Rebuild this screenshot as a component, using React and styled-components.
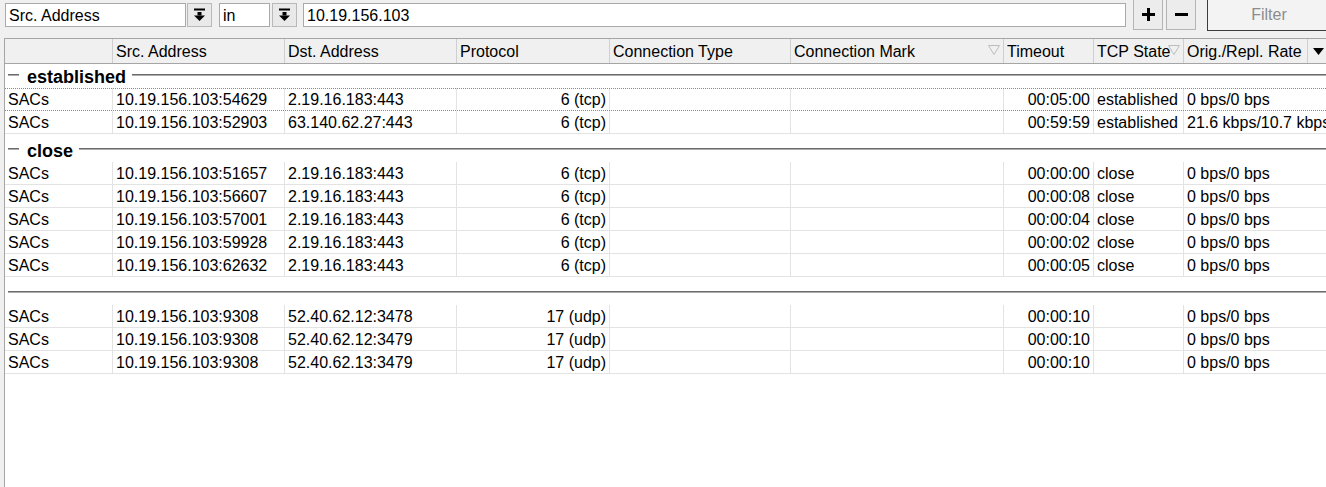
import React from 'react';
import styled, { createGlobalStyle } from 'styled-components';

const GlobalStyle = createGlobalStyle`
    html, body {
        margin: 0;
        padding: 0;
        overflow: hidden;
        background: #f0f0f0;
        font-family: "Liberation Sans", Arial, sans-serif;
        font-size: 16px;
        color: #000;
    }
`

const columns = [
    { key: 'comment', title: '', width: 108 },
    { key: 'src', title: 'Src. Address', width: 172 },
    { key: 'dst', title: 'Dst. Address', width: 172 },
    { key: 'proto', title: 'Protocol', width: 153, right: true },
    { key: 'type', title: 'Connection Type', width: 181 },
    { key: 'mark', title: 'Connection Mark', width: 213, sort: true },
    { key: 'timeout', title: 'Timeout', width: 90, right: true },
    { key: 'tcp', title: 'TCP State', width: 90, sort: true },
    { key: 'rate', title: 'Orig./Repl. Rate', width: 124 },
]

const headTemplate = columns.map(c => c.width + 'px').join(' ') + ' 1fr';
const rowTemplate = columns.slice(0, -1).map(c => c.width + 'px').join(' ') + ' 1fr';

const conn = (src, dst, proto, timeout, tcp, rate = '0 bps/0 bps') => ({
    comment: 'SACs', src, dst, proto, type: '', mark: '', timeout, tcp, rate,
})

const groups = [
    {
        name: 'established',
        rows: [
            conn('10.19.156.103:54629', '2.19.16.183:443', '6 (tcp)', '00:05:00', 'established'),
            conn('10.19.156.103:52903', '63.140.62.27:443', '6 (tcp)', '00:59:59', 'established', '21.6 kbps/10.7 kbps'),
        ],
    },
    {
        name: 'close',
        rows: [
            conn('10.19.156.103:51657', '2.19.16.183:443', '6 (tcp)', '00:00:00', 'close'),
            conn('10.19.156.103:56607', '2.19.16.183:443', '6 (tcp)', '00:00:08', 'close'),
            conn('10.19.156.103:57001', '2.19.16.183:443', '6 (tcp)', '00:00:04', 'close'),
            conn('10.19.156.103:59928', '2.19.16.183:443', '6 (tcp)', '00:00:02', 'close'),
            conn('10.19.156.103:62632', '2.19.16.183:443', '6 (tcp)', '00:00:05', 'close'),
        ],
    },
    {
        name: '',
        rows: [
            conn('10.19.156.103:9308', '52.40.62.12:3478', '17 (udp)', '00:00:10', ''),
            conn('10.19.156.103:9308', '52.40.62.12:3479', '17 (udp)', '00:00:10', ''),
            conn('10.19.156.103:9308', '52.40.62.13:3479', '17 (udp)', '00:00:10', ''),
        ],
    },
]

// bar over a down arrow, used on the combo drop buttons
const DropIcon = () => (
    <svg width="13" height="14" viewBox="0 0 13 14">
        <rect x="1" y="0.5" width="11" height="2" fill="#000" />
        <rect x="4.5" y="4" width="4" height="3.5" fill="#000" />
        <path d="M1 7.5h11L6.5 13z" fill="#000" />
    </svg>
)

const PlusIcon = () => (
    <svg width="13" height="13" viewBox="0 0 13 13">
        <rect x="5" y="0" width="3" height="13" fill="#000" />
        <rect x="0" y="5" width="13" height="3" fill="#000" />
    </svg>
)

const MinusIcon = () => (
    <svg width="13" height="13" viewBox="0 0 13 13">
        <rect x="0" y="5" width="13" height="3" fill="#000" />
    </svg>
)

const SortMark = () => (
    <svg width="12" height="10" viewBox="0 0 12 10">
        <path d="M0.5 0.5h11L6 9.5z" fill="none" stroke="#bdbdbd" />
    </svg>
)

const MenuArrow = () => (
    <svg width="11" height="7" viewBox="0 0 11 7">
        <path d="M0 0h11L5.5 7z" fill="#000" />
    </svg>
)

const App = () => {
    return (
        <Page>
            <GlobalStyle />
            <Toolbar>
                <Field $width={181}>Src. Address</Field>
                <DropButton $gap={1}><DropIcon /></DropButton>
                <Field $width={51} $gap={7}>in</Field>
                <DropButton $gap={2}><DropIcon /></DropButton>
                <Field $width={823} $gap={6}>10.19.156.103</Field>
                <SquareButton $gap={7}><PlusIcon /></SquareButton>
                <SquareButton $gap={3}><MinusIcon /></SquareButton>
                <FilterButton>Filter</FilterButton>
            </Toolbar>

            <Table>
                <HeadRow>
                    {columns.map(c => (
                        <HeadCell key={c.key}>
                            {c.title}
                            {c.sort && <SortSlot><SortMark /></SortSlot>}
                        </HeadCell>
                    ))}
                    <MenuCell><MenuArrow /></MenuCell>
                </HeadRow>

                {groups.map((g, gi) => (
                    <React.Fragment key={gi}>
                        <GroupRow $first={gi === 0}>
                            <GroupLine $short />
                            {g.name && <GroupName>{g.name}</GroupName>}
                            <GroupLine />
                        </GroupRow>
                        {g.rows.map((r, ri) => (
                            <Row key={ri} $focused={gi === 0 && ri === 0}>
                                {columns.map(c => (
                                    <Cell key={c.key} $right={c.right}>{r[c.key]}</Cell>
                                ))}
                            </Row>
                        ))}
                    </React.Fragment>
                ))}
            </Table>
        </Page>
    )
}

const Page = styled.div`
    display: flex;
    flex-direction: column;
    height: 100vh;
`

const Toolbar = styled.div`
    display: flex;
    align-items: flex-start;
    height: 31px;
    padding-left: 5px;
    margin-bottom: 7px;
    white-space: nowrap;
`

const Field = styled.div`
    box-sizing: border-box;
    width: ${p => p.$width}px;
    height: 24px;
    margin-top: 3px;
    margin-left: ${p => p.$gap || 0}px;
    padding: 1px 3px 0;
    line-height: 22px;
    background: #fff;
    border: 1px solid #a9a9a9;
    flex-shrink: 0;
`

const DropButton = styled.div`
    box-sizing: border-box;
    width: 25px;
    height: 24px;
    margin-top: 3px;
    margin-left: ${p => p.$gap}px;
    display: flex;
    align-items: center;
    justify-content: center;
    background: #e9e9e9;
    border: 1px solid #b9b9b9;
    flex-shrink: 0;
`

const SquareButton = styled.div`
    box-sizing: border-box;
    width: 30px;
    height: 31px;
    margin-top: -1px;
    margin-left: ${p => p.$gap}px;
    display: flex;
    align-items: center;
    justify-content: center;
    background: #ececec;
    border: 1px solid #b4b4b4;
    flex-shrink: 0;
`

const FilterButton = styled.div`
    box-sizing: border-box;
    width: 124px;
    height: 32px;
    margin-top: -1px;
    margin-left: 11px;
    display: flex;
    align-items: center;
    justify-content: center;
    background: #f3f3f3;
    border: 1px solid #3c3c3c;
    color: #8c8c8c;
    flex-shrink: 0;
`

const Table = styled.div`
    flex: 1;
    margin-left: 4px;
    background: #fff;
    border-top: 1px solid #a5a5a5;
    border-left: 1px solid #a5a5a5;
    white-space: nowrap;
`

const HeadRow = styled.div`
    display: grid;
    grid-template-columns: ${headTemplate};
    height: 25px;
    box-sizing: border-box;
    border-bottom: 1px solid #a5a5a5;
    background: #f0f0f0;
`

const HeadCell = styled.div`
    position: relative;
    box-sizing: border-box;
    padding: 1px 3px 0;
    line-height: 23px;
    border-right: 1px solid #cfcfcf;
    overflow: hidden;
`

const SortSlot = styled.span`
    position: absolute;
    right: 3px;
    top: 6px;
    line-height: 0;
`

const MenuCell = styled.div`
    display: flex;
    align-items: center;
    padding-left: 5px;
`

const GroupRow = styled.div`
    display: flex;
    align-items: center;
    height: 24px;
    padding-top: ${p => (p.$first ? 0 : 4)}px;
`

const GroupLine = styled.div`
    flex: ${p => (p.$short ? '0 0 11px' : '1')};
    margin-left: ${p => (p.$short ? 3 : 0)}px;
    margin-bottom: 3px;
    border-top: 1px solid #6c6c6c;
    border-bottom: 1px solid #ababab;
`

const GroupName = styled.span`
    margin: 0 6px 0 8px;
    padding-top: 2px;
    font-size: 18px;
    font-weight: bold;
    line-height: 24px;
`

const Row = styled.div`
    position: relative;
    display: grid;
    grid-template-columns: ${rowTemplate};
    height: 23px;
    box-sizing: border-box;
    border-bottom: 1px ${p => (p.$focused ? 'dotted #8a8a8a' : 'solid #e3e3e3')};
    &::before {
        content: '';
        display: ${p => (p.$focused ? 'block' : 'none')};
        position: absolute;
        top: 0;
        left: 0;
        right: 0;
        border-top: 1px dotted #8a8a8a;
    }
`

const Cell = styled.div`
    box-sizing: border-box;
    padding: 1px 3px 0;
    line-height: 21px;
    text-align: ${p => (p.$right ? 'right' : 'left')};
    border-right: 1px solid #e3e3e3;
    &:last-child {
        border-right: none;
        overflow: visible;
    }
`

export default App;
